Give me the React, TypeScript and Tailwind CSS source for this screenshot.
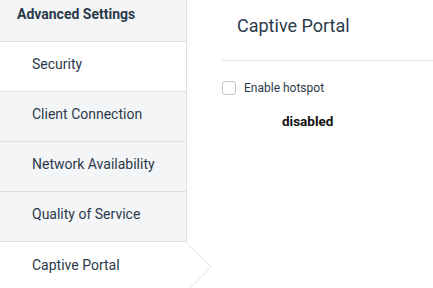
const items = ["Security", "Client Connection", "Network Availability", "Quality of Service", "Captive Portal"];

export default function App() {
  const active = "Captive Portal";

  return (
    <div className="flex h-[288px] w-[433px] overflow-hidden bg-white font-['Roboto',sans-serif] text-[#2b3a4a]">
      <nav className="relative w-[187px] shrink-0">
        <div className="h-[42px] border-b border-r border-[#dcdfe3] bg-[#f4f5f7] pl-[17px] pt-[5px] text-[14px] font-bold leading-[18px]">
          Advanced Settings
        </div>
        {items.map((item) => {
          const selected = item === active;
          const hovered = item === "Security";
          return (
            <div
              key={item}
              className={
                selected
                  ? "relative flex h-[50px] items-center bg-white pb-1 pl-8 text-[14px]"
                  : hovered
                    ? "flex h-[50px] items-center border-b border-r border-[#dcdfe3] bg-white pb-1 pl-8 text-[14px]"
                    : "flex h-[50px] items-center border-b border-r border-[#dcdfe3] bg-[#f4f5f7] pb-1 pl-8 text-[14px]"
              }
            >
              {item}
              {selected && (
                <svg className="absolute left-[186px] top-0" width="27" height="50" viewBox="0 0 27 50">
                  <path d="M0 0 L25 25 L3 47" fill="white" stroke="#e3e5e8" strokeWidth="1" />
                </svg>
              )}
            </div>
          );
        })}
      </nav>

      <main className="flex-1 pl-[35px]">
        <h1 className="pl-[15px] pt-[13px] text-[18px] leading-[25px]">Captive Portal</h1>
        <div className="mt-[22px] border-t border-[#e3e5e8]" />
        <label className="mt-[18px] flex items-center gap-[8px] text-[12px]">
          <span className="h-[14px] w-[14px] rounded-[3px] border border-[#c4c8cd] bg-white" />
          Enable hotspot
        </label>
        <div className="mt-[14px] pl-[60px] text-[13.5px] font-bold text-[#111]">disabled</div>
      </main>
    </div>
  );
}
